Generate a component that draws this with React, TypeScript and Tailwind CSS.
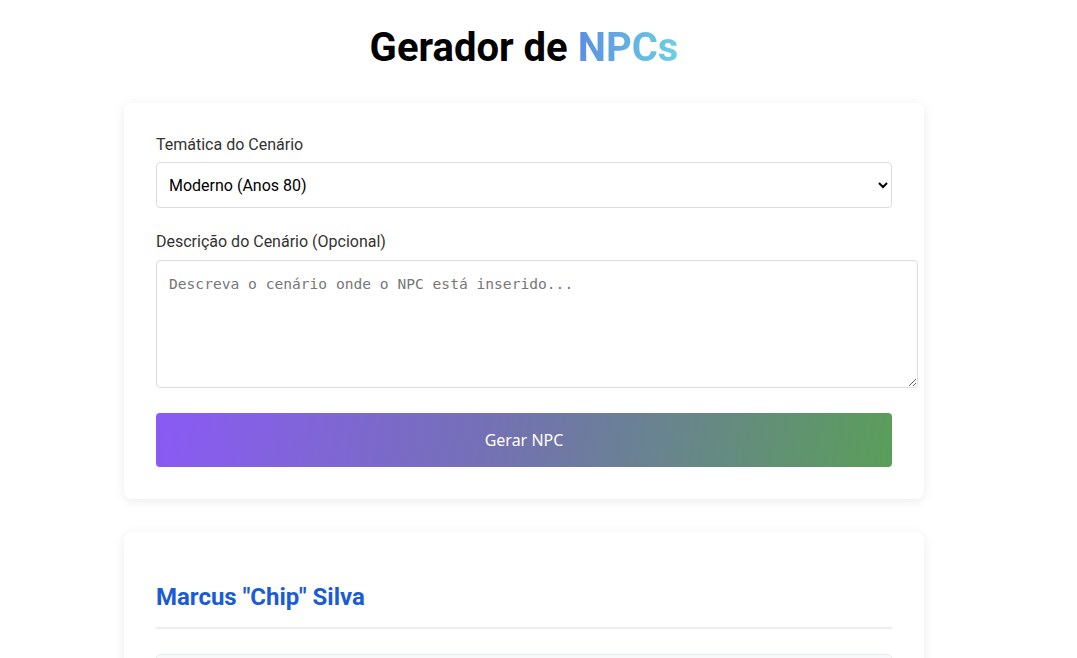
import { useState } from 'react';

const temas = ['Moderno (Anos 80)', 'Fantasia Medieval', 'Cyberpunk', 'Velho Oeste', 'Pós-Apocalíptico'];

export default function App() {
    const [tema, setTema] = useState(temas[0]);
    const [descricao, setDescricao] = useState('');

    return (
        <div className="min-h-screen w-[1048px] bg-white font-['Roboto',sans-serif] text-[#333]">
            <h1 className="pt-[24px] text-center text-[40px] font-bold leading-[48px] text-black">
                Gerador de{' '}
                <span className="bg-[linear-gradient(90deg,#5b8fe3,#6dd0e2)] bg-clip-text text-transparent">NPCs</span>
            </h1>

            {/* Formulário */}
            <div className="mx-auto mt-[31px] w-[800px] rounded-lg bg-white p-8 shadow-[0_2px_12px_rgba(0,0,0,0.08)]">
                <label className="block text-base leading-[19px] text-[#333]">Temática do Cenário</label>
                <select
                    value={tema}
                    onChange={(e) => setTema(e.target.value)}
                    className="mt-2 block h-[46px] w-full rounded border border-[#ddd] bg-white pl-[8px] pr-[18px] text-base text-black outline-none"
                >
                    {temas.map((t) => (
                        <option key={t}>{t}</option>
                    ))}
                </select>

                <label className="mt-6 block text-base leading-[19px] text-[#333]">Descrição do Cenário (Opcional)</label>
                <textarea
                    value={descricao}
                    onChange={(e) => setDescricao(e.target.value)}
                    placeholder="Descreva o cenário onde o NPC está inserido..."
                    className="mt-[9px] box-content block h-[100px] w-full rounded border border-[#ddd] pl-[12px] pr-3 pt-[14px] pb-[12px] font-['DejaVu_Sans_Mono',monospace] text-[14.6px] leading-[17px] placeholder:text-[#777] outline-none"
                />

                <button className="mt-[25px] block h-[54px] w-full rounded bg-[linear-gradient(100deg,#8a5af5,#7470b5_45%,#5a9e5a)] font-['Noto_Sans',sans-serif] text-base text-white">
                    Gerar NPC
                </button>
            </div>

            {/* Resultado */}
            <div className="mx-auto mt-[33px] w-[800px] rounded-lg bg-white p-8 pt-[51px] shadow-[0_2px_12px_rgba(0,0,0,0.08)]">
                <h2 className="border-b-2 border-[#eee] pb-[15px] text-2xl font-bold leading-[29px] text-[#1a5bd6]">
                    Marcus "Chip" Silva
                </h2>
                <div className="mt-[25px] h-[120px] rounded border border-[#e9ecef] bg-[#f8f9fa]" />
            </div>
        </div>
    );
}
